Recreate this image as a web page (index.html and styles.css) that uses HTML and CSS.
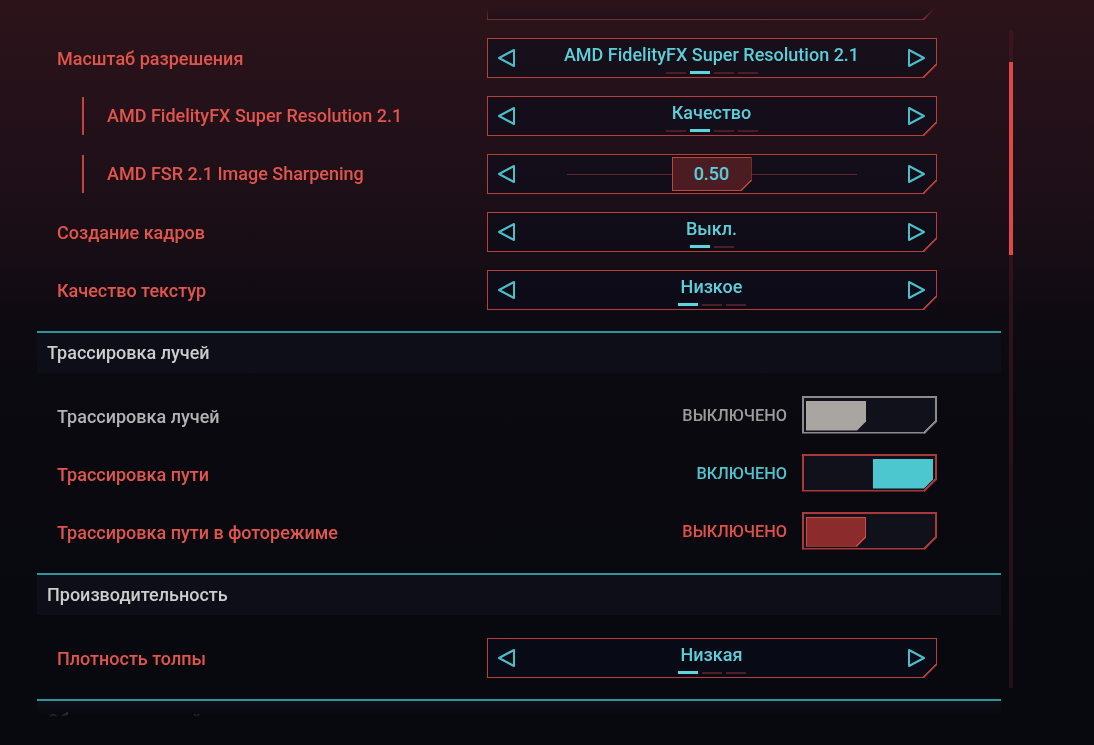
FILE: index.html
```html
<!DOCTYPE html>
<html lang="ru">
<head>
<meta charset="utf-8">
<title>Настройки графики</title>
<link rel="stylesheet" href="styles.css">
</head>
<body>
<div class="screen">
  <main class="panel">
    <div class="rows rows-first">
      <div class="row">
        <div class="label"></div>
        <div class="ctl"><div class="sel cut"></div></div>
      </div>
      <div class="row">
        <div class="label">Масштаб разрешения</div>
        <div class="ctl">
          <div class="sel cut">
            <svg class="arrow" viewBox="0 0 20 20"><path d="M17 2 L17 18 L2 10 Z"/></svg>
            <div class="mid">
              <div class="val">AMD FidelityFX Super Resolution 2.1</div>
              <div class="dots"><i></i><i class="on"></i><i></i><i></i></div>
            </div>
            <svg class="arrow" viewBox="0 0 20 20"><path d="M3 2 L3 18 L18 10 Z"/></svg>
          </div>
        </div>
      </div>
      <div class="row">
        <div class="label sub">AMD FidelityFX Super Resolution 2.1</div>
        <div class="ctl">
          <div class="sel cut">
            <svg class="arrow" viewBox="0 0 20 20"><path d="M17 2 L17 18 L2 10 Z"/></svg>
            <div class="mid">
              <div class="val">Качество</div>
              <div class="dots"><i></i><i class="on"></i><i></i><i></i></div>
            </div>
            <svg class="arrow" viewBox="0 0 20 20"><path d="M3 2 L3 18 L18 10 Z"/></svg>
          </div>
        </div>
      </div>
      <div class="row">
        <div class="label sub">AMD FSR 2.1 Image Sharpening</div>
        <div class="ctl">
          <div class="sel cut">
            <svg class="arrow" viewBox="0 0 20 20"><path d="M17 2 L17 18 L2 10 Z"/></svg>
            <div class="mid slider">
              <div class="track-line">
                <div class="handle cut"><span class="val">0.50</span></div>
              </div>
            </div>
            <svg class="arrow" viewBox="0 0 20 20"><path d="M3 2 L3 18 L18 10 Z"/></svg>
          </div>
        </div>
      </div>
      <div class="row">
        <div class="label">Создание кадров</div>
        <div class="ctl">
          <div class="sel cut">
            <svg class="arrow" viewBox="0 0 20 20"><path d="M17 2 L17 18 L2 10 Z"/></svg>
            <div class="mid">
              <div class="val">Выкл.</div>
              <div class="dots"><i class="on"></i><i></i></div>
            </div>
            <svg class="arrow" viewBox="0 0 20 20"><path d="M3 2 L3 18 L18 10 Z"/></svg>
          </div>
        </div>
      </div>
      <div class="row">
        <div class="label">Качество текстур</div>
        <div class="ctl">
          <div class="sel cut">
            <svg class="arrow" viewBox="0 0 20 20"><path d="M17 2 L17 18 L2 10 Z"/></svg>
            <div class="mid">
              <div class="val">Низкое</div>
              <div class="dots"><i class="on"></i><i></i><i></i></div>
            </div>
            <svg class="arrow" viewBox="0 0 20 20"><path d="M3 2 L3 18 L18 10 Z"/></svg>
          </div>
        </div>
      </div>
    </div>

    <section class="group">
      <h2 class="ghead">Трассировка лучей</h2>
      <div class="rows">
        <div class="row">
          <div class="label gray">Трассировка лучей</div>
          <div class="ctl tg">
            <span class="state gray">ВЫКЛЮЧЕНО</span>
            <div class="tog cut grey-t"><div class="knob cut"></div></div>
          </div>
        </div>
        <div class="row">
          <div class="label">Трассировка пути</div>
          <div class="ctl tg">
            <span class="state teal">ВКЛЮЧЕНО</span>
            <div class="tog cut on-t"><div class="knob cut"></div></div>
          </div>
        </div>
        <div class="row">
          <div class="label">Трассировка пути в фоторежиме</div>
          <div class="ctl tg">
            <span class="state red">ВЫКЛЮЧЕНО</span>
            <div class="tog cut red-t"><div class="knob cut"></div></div>
          </div>
        </div>
      </div>
    </section>

    <section class="group">
      <h2 class="ghead">Производительность</h2>
      <div class="rows">
        <div class="row">
          <div class="label">Плотность толпы</div>
          <div class="ctl">
            <div class="sel cut">
              <svg class="arrow" viewBox="0 0 20 20"><path d="M17 2 L17 18 L2 10 Z"/></svg>
              <div class="mid">
                <div class="val">Низкая</div>
                <div class="dots"><i class="on"></i><i></i><i></i></div>
              </div>
              <svg class="arrow" viewBox="0 0 20 20"><path d="M3 2 L3 18 L18 10 Z"/></svg>
            </div>
          </div>
        </div>
      </div>
    </section>

    <section class="group">
      <h2 class="ghead">Обычные настройки</h2>
    </section>
  </main>

  <aside class="scroll">
    <div class="track"><div class="thumb"></div></div>
  </aside>
</div>
</body>
</html>
```

FILE: styles.css
```css
html, body {
  margin: 0;
  padding: 0;
  width: 1094px;
  height: 745px;
  overflow: hidden;
}

body {
  background: linear-gradient(to bottom,
    #2c1319 0px,
    #24111a 110px,
    #1a0e16 230px,
    #0e0a12 320px,
    #09090f 440px,
    #08090e 745px);
  font-family: Roboto, "Liberation Sans", sans-serif;
  font-weight: 500;
}

.screen {
  display: flex;
  height: 745px;
}

.panel {
  margin-left: 37px;
  width: 964px;
  height: 745px;
  flex: none;
  -webkit-mask-image: linear-gradient(to bottom, transparent 0px, transparent 8px, #000 28px, #000 702px, transparent 717px);
  mask-image: linear-gradient(to bottom, transparent 0px, transparent 8px, #000 28px, #000 702px, transparent 717px);
}

.rows-first {
  margin-top: -29px;
}

.row {
  display: flex;
  align-items: center;
  height: 58px;
  padding-left: 20px;
  padding-right: 64px;
}

.label {
  flex: 1;
  font-size: 18px;
  line-height: 22px;
  padding-top: 1px;
  color: #e0554d;
  white-space: nowrap;
}

.label.sub {
  margin-left: 25px;
  border-left: 2px solid #c2443e;
  padding-left: 23px;
  padding-top: 0;
  height: 38px;
  display: flex;
  align-items: center;
}

.label.gray {
  color: #b3b3b3;
}

.ctl {
  width: 450px;
  flex: none;
}

/* cut-corner frames */
.cut {
  position: relative;
  clip-path: polygon(0 0, 100% 0, 100% calc(100% - var(--c)), calc(100% - var(--c)) 100%, 0 100%);
}

.cut::after {
  content: "";
  position: absolute;
  right: calc(0px - var(--bw));
  bottom: calc(0px - var(--bw));
  width: calc(var(--c) + 1px);
  height: calc(var(--c) + 1px);
  background: linear-gradient(to top left,
    transparent calc(50% - var(--lw)),
    var(--b) calc(50% - var(--lw)),
    var(--b) calc(50% + var(--lw)),
    transparent calc(50% + var(--lw)));
}

.sel {
  --c: 13px;
  --b: #b73f3b;
  --bw: 1px;
  --lw: 1.1px;
  height: 40px;
  box-sizing: border-box;
  border: 1px solid var(--b);
  background: rgba(10, 12, 28, 0.55);
  display: flex;
  align-items: flex-start;
  padding: 0 10px 0 9px;
}

.arrow {
  width: 20px;
  height: 20px;
  margin-top: 9px;
  flex: none;
}

.arrow path {
  fill: none;
  stroke: #4bbfc9;
  stroke-width: 2;
  stroke-linejoin: round;
}

.mid {
  flex: 1;
  display: flex;
  flex-direction: column;
  align-items: center;
  padding-top: 6px;
}

.val {
  font-size: 18px;
  line-height: 20px;
  color: #5ccfd9;
  white-space: nowrap;
}

.dots {
  display: flex;
  align-items: center;
  gap: 4px;
  height: 3px;
  margin-top: 6px;
}

.dots i {
  display: block;
  width: 20px;
  height: 2px;
  background: #4a1f27;
}

.dots i.on {
  height: 3px;
  background: #5dd5df;
}

/* slider */
.mid.slider {
  padding-top: 0;
  height: 38px;
  justify-content: center;
}

.track-line {
  width: 290px;
  height: 34px;
  display: flex;
  justify-content: center;
  background: linear-gradient(#5a2830, #5a2830) center / 100% 1px no-repeat;
}

.handle {
  --c: 10px;
  --b: #c0433e;
  --bw: 1px;
  --lw: 1.1px;
  width: 80px;
  height: 34px;
  box-sizing: border-box;
  border: 1px solid var(--b);
  background: #4c1c23;
  display: flex;
  align-items: center;
  justify-content: center;
}

/* section headers */
.group {
  margin-top: 12px;
}

.ghead {
  margin: 0;
  height: 40px;
  border-top: 2px solid #2f959b;
  background: #0d0e18;
  padding-left: 10px;
  font-size: 18px;
  font-weight: 500;
  line-height: 40px;
  color: #cdcdcd;
}

.group .rows {
  padding-top: 14px;
}

/* toggles */
.ctl.tg {
  display: flex;
  justify-content: flex-end;
  align-items: center;
  gap: 15px;
}

.state {
  font-size: 16.3px;
  line-height: 20px;
  white-space: nowrap;
}

.state.gray { color: #9c9c9c; }
.state.teal { color: #4ec5ce; }
.state.red  { color: #e2504a; }

.tog {
  --c: 12px;
  --bw: 2px;
  --lw: 1.6px;
  width: 135px;
  height: 38px;
  margin-top: -3px;
  box-sizing: border-box;
  border: 2px solid var(--b);
  background: #10111b;
  padding: 3px 2px 1px;
  display: flex;
}

.knob {
  --c: 9px;
  --bw: 0px;
  --lw: 0px;
  --b: transparent;
  width: 60px;
  height: 100%;
  box-sizing: border-box;
}

.grey-t { --b: #8b8b8b; }
.grey-t .knob { background: #a9a6a2; }

.on-t { --b: #a9393a; justify-content: flex-end; }
.on-t .knob { background: #4cc6cf; }

.red-t { --b: #a9393a; }
.red-t .knob {
  --b: #cf4a44;
  --bw: 1px;
  --lw: 1px;
  background: #8b2b2c;
  border: 1px solid var(--b);
}

/* scrollbar */
.scroll {
  margin-left: 8px;
  padding-top: 30px;
  flex: none;
}

.track {
  display: flex;
  flex-direction: column;
  width: 4px;
  height: 658px;
  background: linear-gradient(to bottom, #3a161c, #2c121a 50%, #24101a);
}

.thumb {
  margin-top: 32px;
  height: 193px;
  background: #e0474a;
}
```
